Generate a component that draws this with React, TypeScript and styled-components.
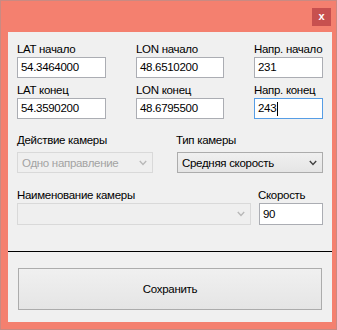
import React from "react";
import styled, { createGlobalStyle } from "styled-components";

const Global = createGlobalStyle`
  html, body { margin: 0; padding: 0; background: #ffffff; }
  body { font-family: "Liberation Sans", Arial, sans-serif; letter-spacing: -0.3px; }
`;

const Window = styled.div`
  width: 337px;
  height: 330px;
  box-sizing: border-box;
  border: 1px solid #c98a82;
  background: #f4806f;
  display: flex;
  flex-direction: column;
  padding: 0 4px 7px 7px;
`;

const TitleBar = styled.div`
  height: 31px;
  flex: none;
  display: flex;
  justify-content: flex-end;
  align-items: flex-start;
  padding-top: 7px;
  box-sizing: border-box;
`;

const CloseButton = styled.div`
  width: 19px;
  height: 18px;
  background: #c7504f;
  color: #ffffff;
  font-size: 11px;
  font-weight: bold;
  display: flex;
  align-items: center;
  justify-content: center;
  line-height: 1;
  margin-right: 1px;
  padding-bottom: 2px;
  box-sizing: border-box;
`;

const Content = styled.div`
  flex: 1;
  background: #f0f0f0;
  display: flex;
  flex-direction: column;
  padding-top: 9px;
  box-sizing: border-box;
`;

const Grid = styled.div`
  display: grid;
  grid-template-columns: 89px 88px 69px;
  column-gap: 30px;
  row-gap: 4px;
  padding-left: 9px;
`;

const Field = styled.div<{ $w?: number; $gap?: number; $ml?: number }>`
  display: flex;
  flex-direction: column;
  width: ${(p) => (p.$w ? `${p.$w}px` : "auto")};
  gap: ${(p) => p.$gap ?? 0}px;
  margin-left: ${(p) => p.$ml ?? 0}px;
`;

const Label = styled.div<{ $shift?: number }>`
  font-size: 11.5px;
  line-height: 16px;
  color: #000;
  white-space: nowrap;
  margin-left: ${(p) => p.$shift ?? 0}px;
`;

const TextBox = styled.div<{ $focused?: boolean; $h?: number }>`
  height: ${(p) => p.$h ?? 21}px;
  box-sizing: border-box;
  background: #fff;
  border: 1px solid ${(p) => (p.$focused ? "#569de5" : "#abadb3")};
  font-size: 11.5px;
  line-height: 19px;
  padding-left: 3px;
  color: #000;
  display: flex;
  align-items: center;
  white-space: nowrap;
`;

const Caret = styled.span`
  display: inline-block;
  width: 1px;
  height: 14px;
  background: #000;
  margin-left: 1px;
`;

const Row = styled.div<{ $top: number }>`
  display: flex;
  padding-left: 9px;
  margin-top: ${(p) => p.$top}px;
  align-items: flex-end;
`;

const Combo = styled.div<{ $disabled?: boolean; $w: number; $h?: number }>`
  width: ${(p) => p.$w}px;
  height: ${(p) => p.$h ?? 21}px;
  box-sizing: border-box;
  border: 1px solid ${(p) => (p.$disabled ? "#d9d9d9" : "#acacac")};
  background: ${(p) =>
    p.$disabled ? "#efefef" : "linear-gradient(#f0f0f0, #e5e5e5)"};
  color: ${(p) => (p.$disabled ? "#a3a3a3" : "#000")};
  font-size: 11.5px;
  display: flex;
  align-items: center;
  justify-content: space-between;
  padding: 0 5px 0 4px;
  white-space: nowrap;
`;

const Separator = styled.div`
  height: 1px;
  background: #000;
  margin-top: 26px;
`;

const SaveButton = styled.div`
  margin: 16px 0 0 10px;
  width: 304px;
  height: 42px;
  box-sizing: border-box;
  border: 1px solid #acacac;
  background: linear-gradient(#f0f0f0, #e5e5e5);
  display: flex;
  align-items: center;
  justify-content: center;
  font-size: 11.5px;
  color: #000;
`;

const Chevron = ({ color }: { color: string }) => (
  <svg width="8" height="6" viewBox="0 0 8 6">
    <path d="M0.8 1 L4 4.4 L7.2 1" fill="none" stroke={color} strokeWidth="1.4" />
  </svg>
);

export default function App() {
  return (
    <>
      <Global />
      <Window>
        <TitleBar>
          <CloseButton>x</CloseButton>
        </TitleBar>
        <Content>
          <Grid>
            <Field>
              <Label>LAT начало</Label>
              <TextBox>54.3464000</TextBox>
            </Field>
            <Field>
              <Label>LON начало</Label>
              <TextBox>48.6510200</TextBox>
            </Field>
            <Field>
              <Label>Напр. начало</Label>
              <TextBox>231</TextBox>
            </Field>
            <Field>
              <Label>LAT конец</Label>
              <TextBox>54.3590200</TextBox>
            </Field>
            <Field>
              <Label>LON конец</Label>
              <TextBox>48.6795500</TextBox>
            </Field>
            <Field>
              <Label>Напр. конец</Label>
              <TextBox $focused>
                243
                <Caret />
              </TextBox>
            </Field>
          </Grid>
          <Row $top={13}>
            <Field $w={136} $gap={4}>
              <Label>Действие камеры</Label>
              <Combo $disabled $w={136}>
                Одно направление
                <Chevron color="#b8b8b8" />
              </Combo>
            </Field>
            <Field $w={146} $gap={4} $ml={24}>
              <Label $shift={-1}>Тип камеры</Label>
              <Combo $w={146}>
                Средняя скорость
                <Chevron color="#404040" />
              </Combo>
            </Field>
          </Row>
          <Row $top={14}>
            <Field $w={234}>
              <Label>Наименование камеры</Label>
              <Combo $disabled $w={234} $h={22}>
                <span />
                <Chevron color="#b8b8b8" />
              </Combo>
            </Field>
            <Field $w={64} $ml={8}>
              <Label $shift={-1}>Скорость</Label>
              <TextBox $h={22}>90</TextBox>
            </Field>
          </Row>
          <Separator />
          <SaveButton>Сохранить</SaveButton>
        </Content>
      </Window>
    </>
  );
}
